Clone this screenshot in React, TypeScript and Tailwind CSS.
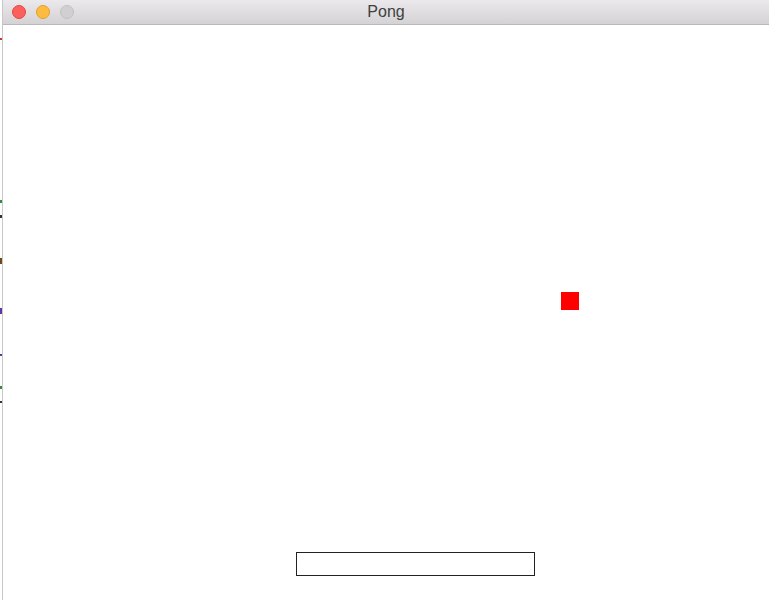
import React from 'react';

const Light: React.FC<{ className: string }> = ({ className }) => (
  <span className={`block w-[14px] h-[14px] rounded-full border ${className}`} />
);

export default function App() {
  return (
    <div className="flex h-[600px] w-[769px] bg-white overflow-hidden" style={{ fontFamily: '"Liberation Sans", Arial, sans-serif' }}>
      {/* sliver of the window behind */}
      <div className="w-[2px] flex flex-col bg-white">
        <div className="h-[38px]" />
        <div className="h-[2px] bg-[#c0392b]" />
        <div className="h-[160px]" />
        <div className="h-[3px] bg-[#3a8a3a]" />
        <div className="h-[12px]" />
        <div className="h-[3px] bg-[#333]" />
        <div className="h-[40px]" />
        <div className="h-[6px] bg-[#6b4a1a]" />
        <div className="h-[44px]" />
        <div className="h-[6px] bg-[#5a3aa0]" />
        <div className="h-[40px]" />
        <div className="h-[2px] bg-[#5a3aa0]" />
        <div className="h-[30px]" />
        <div className="h-[3px] bg-[#3a8a3a]" />
        <div className="h-[12px]" />
        <div className="h-[2px] bg-[#333]" />
      </div>
      <div className="flex-1 flex flex-col border-l border-[#c8c8c8]">
        <div className="relative h-[25px] flex items-center border-b border-[#b9b9b9] bg-gradient-to-b from-[#ebe9eb] to-[#d4d2d4]">
          <div className="flex items-center gap-[10px] pl-[9px]">
            <Light className="bg-[#fc605c] border-[#e1483f]" />
            <Light className="bg-[#fdbc40] border-[#e0a030]" />
            <Light className="bg-[#d0d0d0] border-[#c2c2c2]" />
          </div>
          <span className="absolute left-0 right-0 text-center text-[16px] text-[#404040] leading-none">Pong</span>
        </div>
        <div className="relative flex-1 bg-white">
          <div className="absolute left-[558px] top-[267px] w-[18px] h-[18px] bg-[#ff0000]" />
          <div className="absolute left-[293px] top-[527px] w-[239px] h-[24px] border border-[#222]" />
        </div>
      </div>
    </div>
  );
}
